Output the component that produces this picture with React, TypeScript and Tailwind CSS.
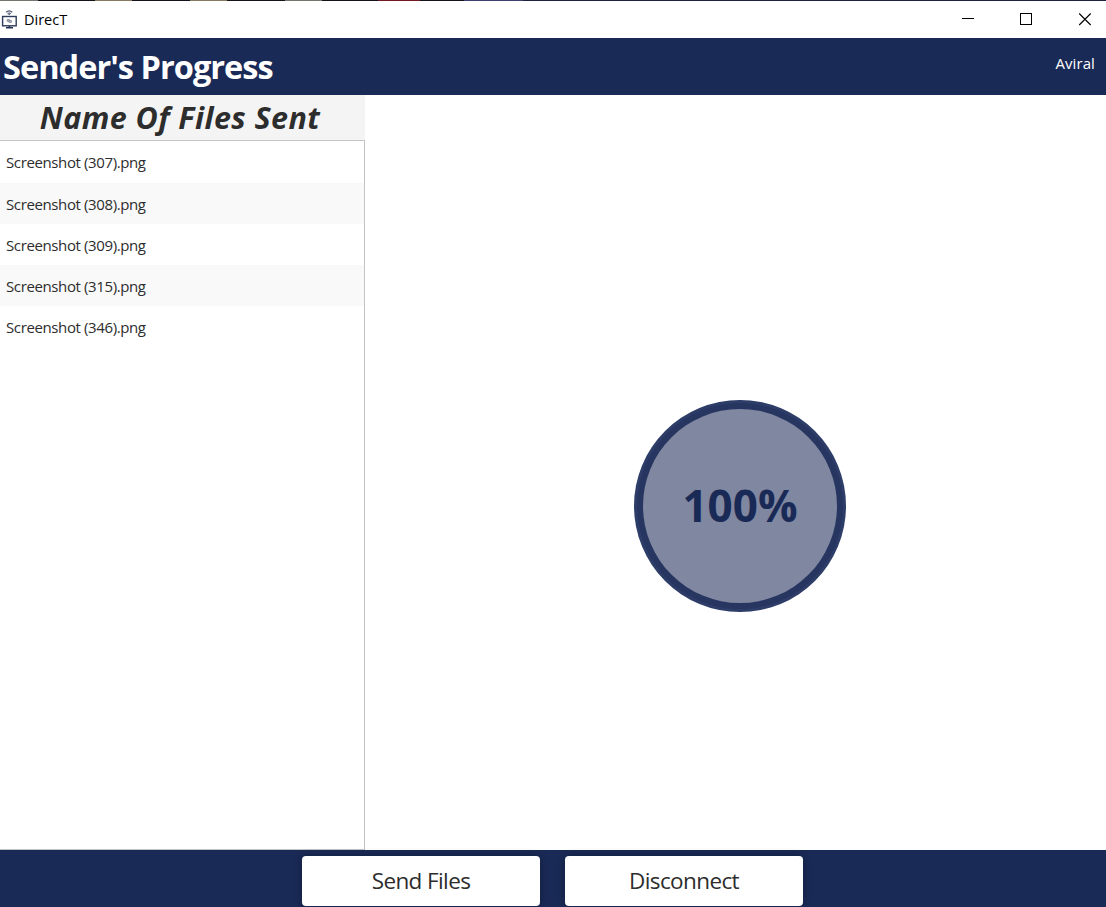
const files = [
  "Screenshot (307).png",
  "Screenshot (308).png",
  "Screenshot (309).png",
  "Screenshot (315).png",
  "Screenshot (346).png",
];

function AppIcon() {
  return (
    <svg width="16" height="19" viewBox="0 0 16 19" fill="none" stroke="#4a526c">
      <path d="M5.2 2.2Q8.2 -0.5 11.2 2.2" strokeWidth="1.3" />
      <path d="M6.6 3.5Q8.2 2.5 9.8 3.5" strokeWidth="1.2" />
      <rect x="7.6" y="3.9" width="1.3" height="1.1" fill="#3a435f" stroke="none" />
      <rect x="1.6" y="6.5" width="13.6" height="9.3" stroke="#2f3a5c" strokeWidth="1.4" />
      <path d="M8.4 16V17.5M5 17.7H12" stroke="#26304f" strokeWidth="1.5" />
      <ellipse cx="7.4" cy="10.5" rx="1.4" ry="0.9" stroke="#8b90a0" strokeWidth="1.1" />
      <ellipse cx="9.2" cy="11.5" rx="1.4" ry="0.9" stroke="#8b90a0" strokeWidth="1.1" />
    </svg>
  );
}

function TitleBar() {
  return (
    <div className="flex h-[37px] shrink-0 items-center bg-white pl-[1px] text-black">
      <AppIcon />
      <span className="ml-[7px] text-[14.5px]">DirecT</span>
      <div className="ml-auto flex items-center pr-[14px]" aria-hidden="true">
        <svg width="130" height="13" viewBox="0 0 130 13" fill="none" stroke="#000" shapeRendering="crispEdges">
          <path d="M0 5.5H12" />
          <rect x="58.5" y="0.5" width="11" height="11" />
          <path d="M117.2 0.5L128.7 12M128.7 0.5L117.2 12" shapeRendering="auto" strokeWidth="1.1" />
        </svg>
      </div>
    </div>
  );
}

function ActionButton({ label }: { label: string }) {
  return (
    <button className="h-[50px] w-[238px] rounded-[4px] bg-white text-[22.5px] leading-[50px] tracking-[-0.6px] text-[#2d2d2d] shadow-[0_0_8px_rgba(0,0,0,0.3)]">
      {label}
    </button>
  );
}

export default function App() {
  return (
    <div className="flex h-[907px] w-[1106px] flex-col overflow-hidden bg-white font-['Open_Sans','Noto_Sans',sans-serif] whitespace-nowrap">
      <div className="flex h-px shrink-0 bg-[#1b2340]">
        <div className="w-[38px] bg-[#77736f]" />
        <div className="w-[57px] bg-[#15131a]" />
        <div className="w-[37px] bg-[#857a5c]" />
        <div className="w-[58px] bg-[#15131a]" />
        <div className="w-[37px] bg-[#857a5c]" />
        <div className="w-[58px] bg-[#15131a]" />
        <div className="w-[37px] bg-[#77736f]" />
        <div className="w-[56px] bg-[#15131a]" />
        <div className="w-[42px] bg-[#701823]" />
        <div className="w-[44px] bg-[#15131a]" />
        <div className="w-[59px] bg-[#3f3f6d]" />
      </div>
      <TitleBar />
      <header className="flex h-[57px] shrink-0 items-center bg-[#1a2a56] pr-[11px] pl-[3px] text-white">
        <h1 className="pt-[2px] text-[32.5px] font-bold tracking-[-0.97px]">Sender's Progress</h1>
        <span className="mb-[7px] ml-auto text-[15px] tracking-[0.1px]">Aviral</span>
      </header>
      <main className="flex min-h-0 flex-1">
        <section className="flex w-[365px] flex-col">
          <h2 className="h-[45px] bg-[#f4f4f4] pr-[5px] text-center text-[30.5px] leading-[45px] font-bold tracking-[0.42px] text-[#2d2d2d] italic">
            Name Of Files Sent
          </h2>
          <ul className="flex-1 border-t border-r border-b border-[#c4c4c4] pt-px">
            {files.map((file) => (
              <li
                key={file}
                className="h-[41px] pl-[6px] text-[15px] leading-[43px] tracking-[-0.38px] text-[#2d2d2d] first:leading-[41px] even:bg-[#f9f9f9]"
              >
                {file}
              </li>
            ))}
          </ul>
        </section>
        <section className="flex flex-1 items-center justify-center pt-[67px] pl-[9px]">
          <div className="flex size-[212px] items-center justify-center rounded-full bg-[#2d3d68]">
            <div className="flex size-[206px] items-center justify-center rounded-full bg-[#273660]">
              <div className="flex size-[194px] items-center justify-center rounded-full bg-[#8087a0] pb-[2px] text-[44px] font-bold text-[#1a2a56]">
                100%
              </div>
            </div>
          </div>
        </section>
      </main>
      <footer className="flex h-[57px] shrink-0 gap-[25px] bg-[#1a2a56] pt-[6px] pl-[302px]">
        <ActionButton label="Send Files" />
        <ActionButton label="Disconnect" />
      </footer>
    </div>
  );
}
